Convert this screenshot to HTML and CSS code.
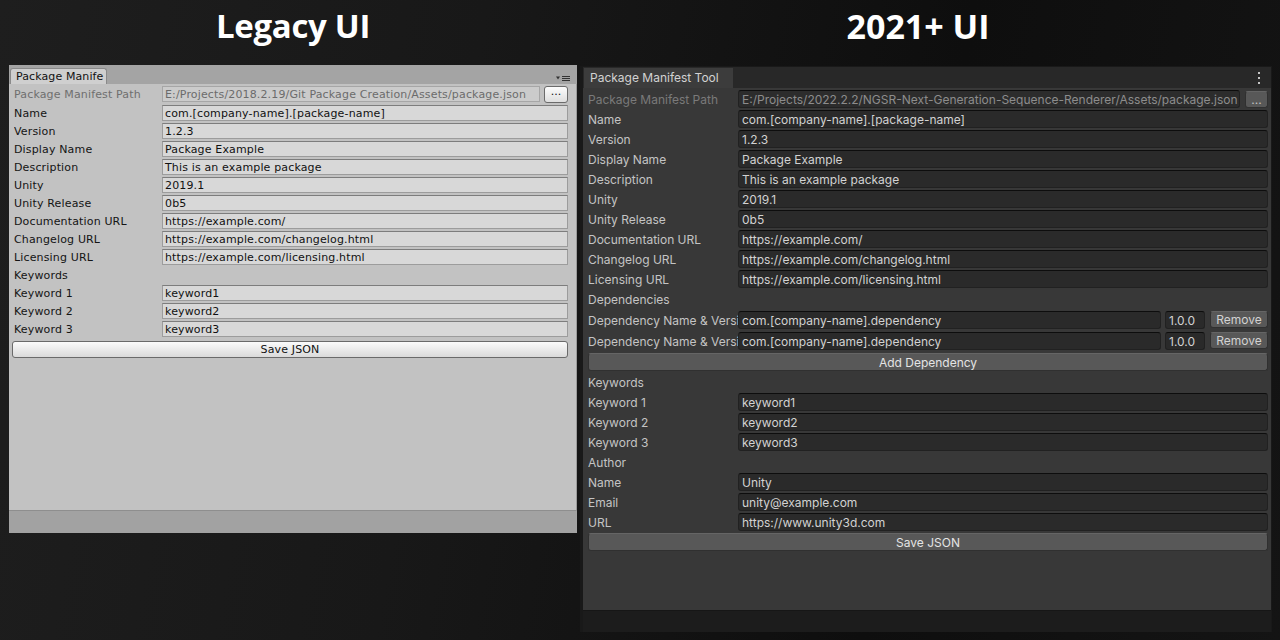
FILE: index.html
```html
<!DOCTYPE html>
<html lang="en">
<head>
<meta charset="utf-8">
<title>Package Manifest Tool — Legacy vs 2021+ UI</title>
<link rel="stylesheet" href="styles.css">
</head>
<body>
<div class="page">
  <div class="titles">
    <h1 class="title title-legacy">Legacy UI</h1>
    <h1 class="title title-new">2021+ UI</h1>
  </div>
  <div class="panels">
    <section class="legacy">
      <div class="l-tabbar">
        <div class="l-tab">Package Manife</div>
        <svg class="l-menu" width="14" height="7" viewBox="0 0 14 7"><path d="M0 1.5h4l-2 3z" fill="#333"/><path d="M6 1.5h8M6 3.5h8M6 5.5h8" stroke="#333" stroke-width="1"/></svg>
      </div>
      <div class="l-content">
        <div class="l-row l-row-path"><span class="l-label l-disabled">Package Manifest Path</span><div class="l-field l-field-disabled">E:/Projects/2018.2.19/Git Package Creation/Assets/package.json</div><button class="l-dots">...</button></div>
        <div class="l-row"><span class="l-label">Name</span><div class="l-field">com.[company-name].[package-name]</div></div>
        <div class="l-row"><span class="l-label">Version</span><div class="l-field">1.2.3</div></div>
        <div class="l-row"><span class="l-label">Display Name</span><div class="l-field">Package Example</div></div>
        <div class="l-row"><span class="l-label">Description</span><div class="l-field">This is an example package</div></div>
        <div class="l-row"><span class="l-label">Unity</span><div class="l-field">2019.1</div></div>
        <div class="l-row"><span class="l-label">Unity Release</span><div class="l-field">0b5</div></div>
        <div class="l-row"><span class="l-label">Documentation URL</span><div class="l-field">https://example.com/</div></div>
        <div class="l-row"><span class="l-label">Changelog URL</span><div class="l-field">https://example.com/changelog.html</div></div>
        <div class="l-row"><span class="l-label">Licensing URL</span><div class="l-field">https://example.com/licensing.html</div></div>
        <div class="l-row"><span class="l-label">Keywords</span></div>
        <div class="l-row"><span class="l-label">Keyword 1</span><div class="l-field">keyword1</div></div>
        <div class="l-row"><span class="l-label">Keyword 2</span><div class="l-field">keyword2</div></div>
        <div class="l-row"><span class="l-label">Keyword 3</span><div class="l-field">keyword3</div></div>
        <button class="l-save">Save JSON</button>
      </div>
      <div class="l-footer"></div>
    </section>

    <section class="modern">
      <div class="m-tabbar">
        <div class="m-tab">Package Manifest Tool</div>
        <svg class="m-kebab" width="4" height="14" viewBox="0 0 4 14"><rect x="1" y="1" width="2" height="2" fill="#c4c4c4"/><rect x="1" y="6" width="2" height="2" fill="#c4c4c4"/><rect x="1" y="11" width="2" height="2" fill="#c4c4c4"/></svg>
      </div>
      <div class="m-content">
        <div class="m-row"><span class="m-label m-disabled">Package Manifest Path</span><div class="m-field m-field-disabled">E:/Projects/2022.2.2/NGSR-Next-Generation-Sequence-Renderer/Assets/package.json</div><button class="m-btn m-dots">...</button></div>
        <div class="m-row"><span class="m-label">Name</span><div class="m-field">com.[company-name].[package-name]</div></div>
        <div class="m-row"><span class="m-label">Version</span><div class="m-field">1.2.3</div></div>
        <div class="m-row"><span class="m-label">Display Name</span><div class="m-field">Package Example</div></div>
        <div class="m-row"><span class="m-label">Description</span><div class="m-field">This is an example package</div></div>
        <div class="m-row"><span class="m-label">Unity</span><div class="m-field">2019.1</div></div>
        <div class="m-row"><span class="m-label">Unity Release</span><div class="m-field">0b5</div></div>
        <div class="m-row"><span class="m-label">Documentation URL</span><div class="m-field">https://example.com/</div></div>
        <div class="m-row"><span class="m-label">Changelog URL</span><div class="m-field">https://example.com/changelog.html</div></div>
        <div class="m-row"><span class="m-label">Licensing URL</span><div class="m-field">https://example.com/licensing.html</div></div>
        <div class="m-row"><span class="m-label">Dependencies</span></div>
        <div class="m-row m-row-dep"><span class="m-label">Dependency Name &amp; Versi</span><div class="m-field">com.[company-name].dependency</div><div class="m-field m-version">1.0.0</div><button class="m-btn m-remove">Remove</button></div>
        <div class="m-row m-row-dep"><span class="m-label">Dependency Name &amp; Versi</span><div class="m-field">com.[company-name].dependency</div><div class="m-field m-version">1.0.0</div><button class="m-btn m-remove">Remove</button></div>
        <div class="m-row m-row-dep"><button class="m-btn m-wide">Add Dependency</button></div>
        <div class="m-row"><span class="m-label">Keywords</span></div>
        <div class="m-row"><span class="m-label">Keyword 1</span><div class="m-field">keyword1</div></div>
        <div class="m-row"><span class="m-label">Keyword 2</span><div class="m-field">keyword2</div></div>
        <div class="m-row"><span class="m-label">Keyword 3</span><div class="m-field">keyword3</div></div>
        <div class="m-row"><span class="m-label">Author</span></div>
        <div class="m-row"><span class="m-label">Name</span><div class="m-field">Unity</div></div>
        <div class="m-row"><span class="m-label">Email</span><div class="m-field">unity@example.com</div></div>
        <div class="m-row"><span class="m-label">URL</span><div class="m-field">https://www.unity3d.com</div></div>
        <div class="m-row"><button class="m-btn m-wide">Save JSON</button></div>
      </div>
      <div class="m-footer"></div>
    </section>
  </div>
</div>
</body>
</html>
```

FILE: styles.css
```css
* { box-sizing: border-box; }
html, body { margin: 0; padding: 0; }
body {
  width: 1280px;
  height: 640px;
  overflow: hidden;
  background: linear-gradient(100deg, #1e1e1e 0%, #181818 35%, #0e0e0e 70%, #141414 100%);
  font-family: "DejaVu Sans", sans-serif;
}
.page { width: 1280px; height: 640px; }

.titles {
  display: grid;
  grid-template-columns: 586px 664px;
  height: 65px;
}
.title {
  margin: 0;
  font-family: "Open Sans", "DejaVu Sans", sans-serif;
  font-weight: 700;
  font-size: 34px;
  line-height: 52px;
  color: #ffffff;
  text-align: center;
}
.title-legacy { font-size: 33px; letter-spacing: -0.3px; }

.panels {
  display: flex;
  align-items: flex-start;
  padding-left: 9px;
}

/* ---------- Legacy panel ---------- */
.legacy {
  width: 568px;
  height: 468px;
  display: flex;
  flex-direction: column;
  background: #a4a4a4;
}
.l-tabbar {
  height: 19px;
  display: flex;
  align-items: flex-end;
  position: relative;
  background: #a4a4a4;
}
.l-tab {
  margin-left: 1px;
  width: 97px;
  height: 16px;
  overflow: hidden;
  white-space: nowrap;
  background: #cfcfcf;
  border: 1px solid #8a8a8a;
  border-bottom: none;
  border-radius: 3px 3px 0 0;
  padding-left: 5px;
  font-size: 11px;
  line-height: 16px;
  letter-spacing: 0.1px;
  color: #111;
}
.l-menu {
  position: absolute;
  right: 7px;
  top: 10px;
}
.l-content {
  flex: 1;
  background: #c2c2c2;
  padding: 1px 8px 0 3px;
  border-right: 1px solid #9a9a9a;
  border-bottom: 1px solid #8e8e8e;
}
.l-row {
  display: flex;
  align-items: center;
  height: 18px;
  padding-left: 2px;
}
.l-row-path { margin-bottom: 1px; }
.l-label {
  width: 148px;
  flex: none;
  font-size: 11px;
  line-height: 16px;
  padding-top: 2px;
  letter-spacing: 0.15px;
  color: #141414;
  white-space: nowrap;
  overflow: hidden;
}
.l-disabled { color: #6f6f6f; }
.l-field {
  flex: 1;
  min-width: 0;
  height: 16px;
  background: #d8d8d8;
  border: 1px solid #9c9c9c;
  border-top-color: #7d7d7d;
  padding: 0 2px;
  font-size: 11px;
  line-height: 15px;
  letter-spacing: 0.15px;
  color: #111;
  white-space: nowrap;
  overflow: hidden;
}
.l-field-disabled {
  background: #cbcbcb;
  border-color: #a6a6a6;
  color: #6b6b6b;
  margin-right: 4px;
}
.l-dots {
  width: 24px;
  height: 17px;
  flex: none;
  padding: 0 0 4px;
  border: 1px solid #6b6b6b;
  border-radius: 3px;
  background: linear-gradient(#fcfcfc, #dedede);
  font-family: "DejaVu Sans", sans-serif;
  font-size: 11px;
  line-height: 10px;
  color: #111;
}
.l-save {
  display: block;
  width: 100%;
  height: 17px;
  margin-top: 3px;
  padding: 0;
  border: 1px solid #6a6a6a;
  border-radius: 3px;
  background: linear-gradient(#fbfbfb, #dadada);
  font-family: "DejaVu Sans", sans-serif;
  font-size: 11px;
  line-height: 15px;
  letter-spacing: 0.15px;
  color: #111;
}
.l-footer {
  height: 22px;
  background: #a2a2a2;
}

/* ---------- 2021+ panel ---------- */
.modern {
  width: 692px;
  height: 566px;
  margin-left: 3px;
  margin-top: 1px;
  display: flex;
  flex-direction: column;
  background: #191919;
  padding: 1px 1px 0 3px;
  font-family: Inter, "Noto Sans", sans-serif;
}
.m-tabbar {
  height: 21px;
  display: flex;
  align-items: flex-end;
  justify-content: space-between;
  background: #282828;
}
.m-tab {
  width: 149px;
  height: 20px;
  margin-left: 1px;
  background: #3c3c3c;
  padding-left: 6px;
  font-size: 12px;
  line-height: 20px;
  color: #d2d2d2;
  white-space: nowrap;
}
.m-kebab {
  align-self: center;
  margin-right: 10px;
}
.m-content {
  flex: 1;
  background: #383838;
  padding: 1px 3px 0 5px;
}
.m-row {
  display: flex;
  align-items: center;
  height: 20px;
}
.m-row-dep { height: 21px; }
.m-label {
  width: 150px;
  flex: none;
  font-size: 12px;
  line-height: 16px;
  padding-top: 2px;
  color: #c4c4c4;
  white-space: nowrap;
  overflow: hidden;
}
.m-disabled { color: #7a7a7a; }
.m-field {
  flex: 1;
  min-width: 0;
  height: 18px;
  background: #2a2a2a;
  border: 1px solid #212121;
  border-top-color: #0d0d0d;
  border-radius: 3px;
  padding: 0 3px;
  font-size: 12px;
  line-height: 17px;
  color: #d2d2d2;
  white-space: nowrap;
  overflow: hidden;
}
.m-field-disabled {
  color: #8c8c8c;
  background: #2c2c2c;
  margin-right: 5px;
}
.m-btn {
  height: 17px;
  padding: 0;
  background: #585858;
  border: 1px solid #303030;
  border-top-color: #656565;
  border-radius: 3px;
  font-family: Inter, "Noto Sans", sans-serif;
  font-size: 12px;
  line-height: 15px;
  color: #e4e4e4;
  text-align: center;
}
.m-dots {
  width: 23px;
  flex: none;
  line-height: 11px;
  color: #c4c4c4;
}
.m-row-dep .m-field:first-of-type { margin-right: 4px; }
.m-version {
  flex: none;
  width: 40px;
  margin-right: 5px;
}
.m-remove {
  width: 58px;
  flex: none;
  color: #d2d2d2;
}
.m-wide {
  flex: 1;
  height: 18px;
  line-height: 17px;
}
.m-footer {
  height: 22px;
  background: #1c1c1c;
  border-top: 1px solid #161616;
}
```
